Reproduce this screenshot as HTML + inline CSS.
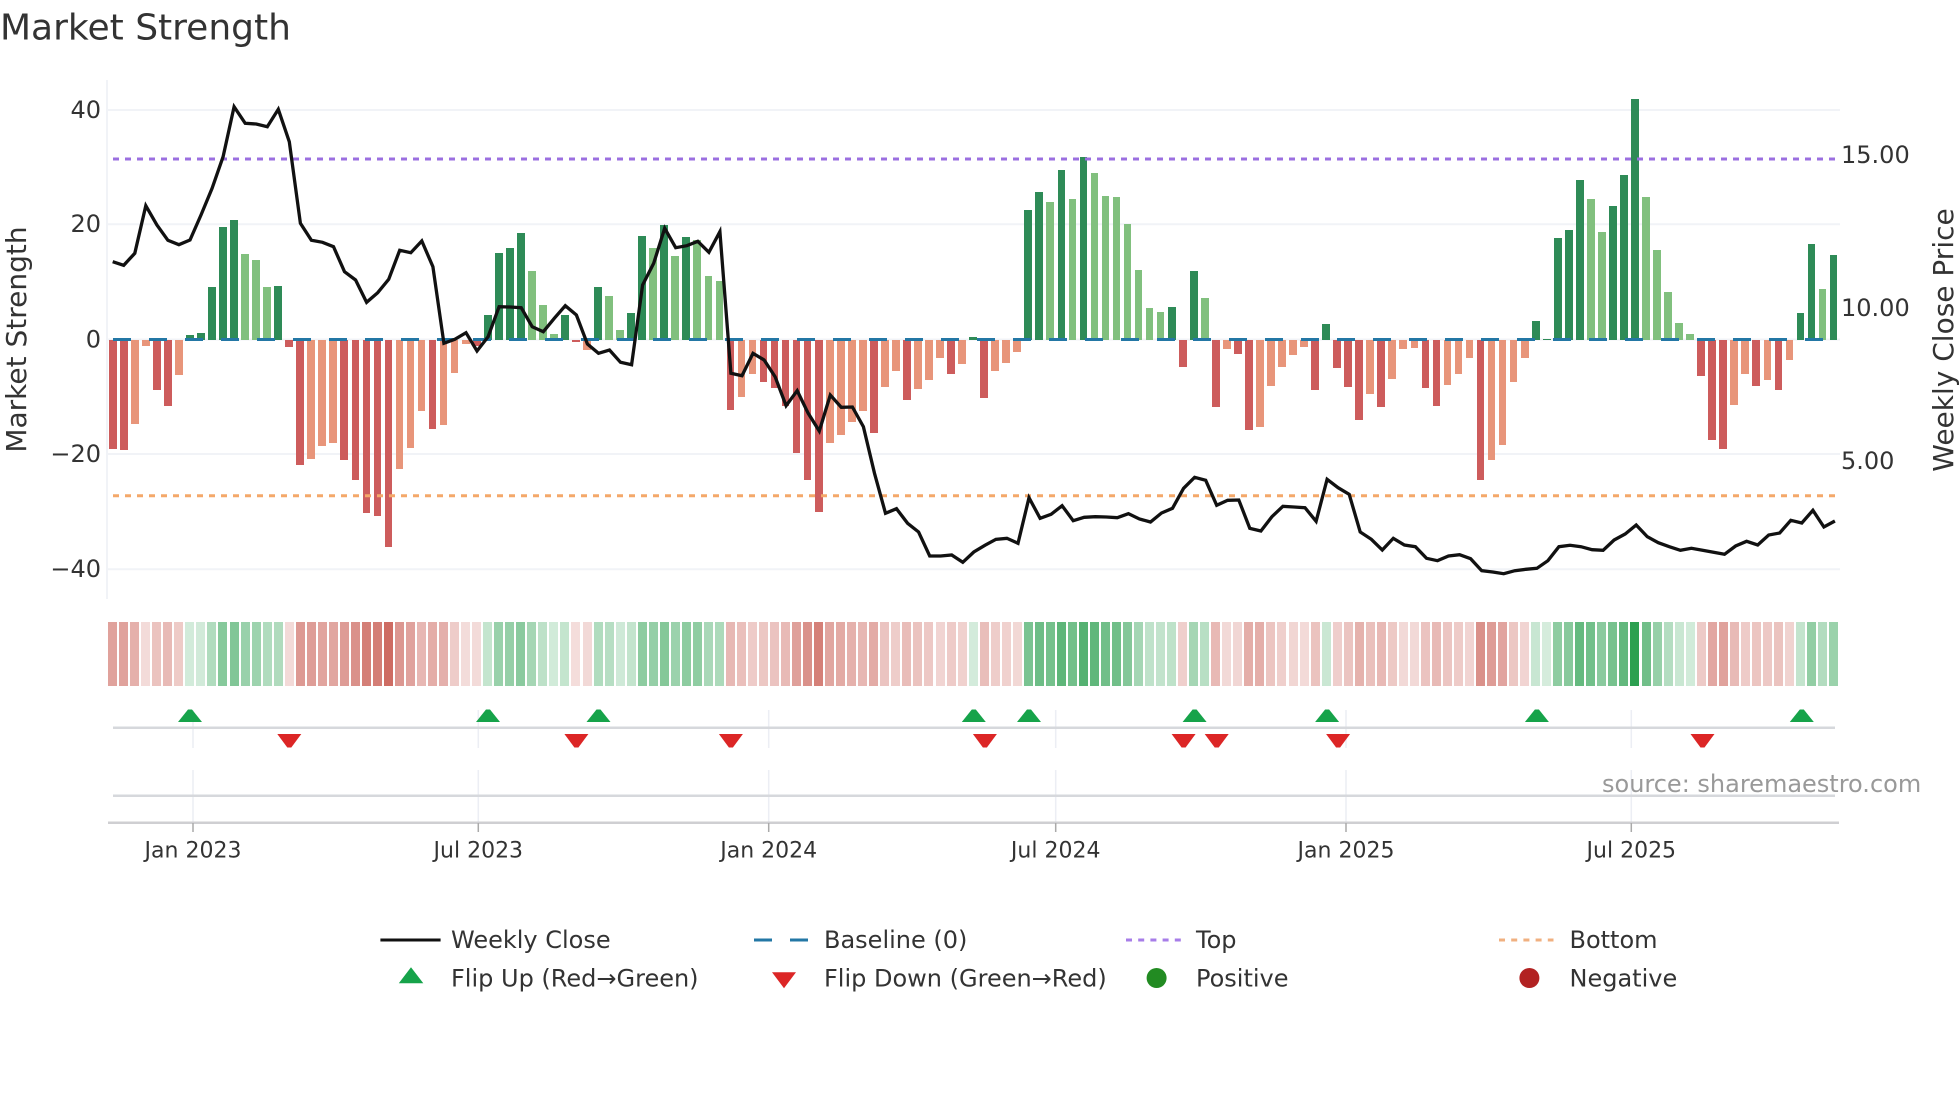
<!DOCTYPE html>
<html><head><meta charset="utf-8"><title>Market Strength</title>
<style>
html,body{margin:0;padding:0;background:#fff}
#p{position:relative;width:1960px;height:1102px;overflow:hidden;background:#fff;font-family:"DejaVu Sans","Liberation Sans",sans-serif}
svg{position:absolute;left:0;top:0}
#r{position:absolute;left:107.18px;top:339.5px;display:flex;height:0}
#r i{display:block;position:relative;flex:none;width:11.04px;height:0}
#r i::after{content:"";position:absolute;left:1.67px;width:7.7px;height:calc(var(--h)*1px)}
#r i::before{content:"";position:absolute;left:1px;width:9px;top:282.5px;height:64px}
.a::after,.b::after{bottom:0;height:calc(var(--h)*1px + 1px)!important}
.c::after,.d::after{top:.5px}
.a::after{background:#2e8b57}
.b::after{background:#81c07e}
.c::after{background:#cd5c5c}
.d::after{background:#e8957a}
.a::before,.b::before{background:rgba(44,160,80,calc(.2 + var(--h)*.00333))}
.c::before,.d::before{background:rgba(200,90,80,calc(.2 + var(--h)*.00333))}
text{fill:#333;font-family:"DejaVu Sans","Liberation Sans",sans-serif}
</style></head><body><div id="p">
<svg width="1960" height="1102">
<g stroke="#f1f3f7" stroke-width="2" fill="none">
<path d="M107 110H1840M107 224.3H1840M107 339.5H1840M107 454H1840M107 569.3H1840M107 80V599"/>
</g>
<g stroke="#eceef4" stroke-width="1.5" fill="none">
<path d="M193 710V748M193 770V823M478.3 710V748M478.3 770V823M768.7 710V748M768.7 770V823M1055.7 710V748M1055.7 770V823M1346 710V748M1346 770V823M1631.3 710V748M1631.3 770V823"/>
</g>
</svg>
<div id="r"><i class=c style=--h:109></i><i class=c style=--h:110></i><i class=d style=--h:84></i><i class=d style=--h:6></i><i class=c style=--h:50></i><i class=c style=--h:66></i><i class=d style=--h:35></i><i class=a style=--h:4></i><i class=a style=--h:6></i><i class=a style=--h:52></i><i class=a style=--h:112></i><i class=a style=--h:119></i><i class=b style=--h:85></i><i class=b style=--h:79></i><i class=b style=--h:52></i><i class=a style=--h:53></i><i class=c style=--h:7></i><i class=c style=--h:125></i><i class=d style=--h:119></i><i class=d style=--h:106></i><i class=d style=--h:103></i><i class=c style=--h:120></i><i class=c style=--h:140></i><i class=c style=--h:173></i><i class=c style=--h:176></i><i class=c style=--h:207></i><i class=d style=--h:129></i><i class=d style=--h:108></i><i class=d style=--h:71></i><i class=c style=--h:89></i><i class=d style=--h:85></i><i class=d style=--h:33></i><i class=d style=--h:4></i><i class=c style=--h:6></i><i class=a style=--h:24></i><i class=a style=--h:86></i><i class=a style=--h:91></i><i class=a style=--h:106></i><i class=b style=--h:68></i><i class=b style=--h:34></i><i class=b style=--h:5></i><i class=a style=--h:24></i><i class=c style=--h:2></i><i class=d style=--h:10></i><i class=a style=--h:52></i><i class=b style=--h:43></i><i class=b style=--h:9></i><i class=a style=--h:26></i><i class=a style=--h:103></i><i class=b style=--h:91></i><i class=a style=--h:114></i><i class=b style=--h:83></i><i class=a style=--h:102></i><i class=b style=--h:99></i><i class=b style=--h:63></i><i class=b style=--h:58></i><i class=c style=--h:70></i><i class=d style=--h:57></i><i class=d style=--h:34></i><i class=c style=--h:42></i><i class=c style=--h:48></i><i class=c style=--h:66></i><i class=c style=--h:113></i><i class=c style=--h:140></i><i class=c style=--h:172></i><i class=d style=--h:103></i><i class=d style=--h:95></i><i class=d style=--h:82></i><i class=d style=--h:71></i><i class=c style=--h:93></i><i class=d style=--h:47></i><i class=d style=--h:31></i><i class=c style=--h:60></i><i class=d style=--h:49></i><i class=d style=--h:40></i><i class=d style=--h:18></i><i class=c style=--h:34></i><i class=d style=--h:24></i><i class=a style=--h:2></i><i class=c style=--h:58></i><i class=d style=--h:31></i><i class=d style=--h:23></i><i class=d style=--h:12></i><i class=a style=--h:129></i><i class=a style=--h:147></i><i class=b style=--h:137></i><i class=a style=--h:169></i><i class=b style=--h:140></i><i class=a style=--h:182></i><i class=b style=--h:166></i><i class=b style=--h:143></i><i class=b style=--h:142></i><i class=b style=--h:115></i><i class=b style=--h:69></i><i class=b style=--h:31></i><i class=b style=--h:27></i><i class=a style=--h:32></i><i class=c style=--h:27></i><i class=a style=--h:68></i><i class=b style=--h:41></i><i class=c style=--h:67></i><i class=d style=--h:9></i><i class=c style=--h:14></i><i class=c style=--h:90></i><i class=d style=--h:87></i><i class=d style=--h:46></i><i class=d style=--h:27></i><i class=d style=--h:15></i><i class=d style=--h:7></i><i class=c style=--h:50></i><i class=a style=--h:15></i><i class=c style=--h:28></i><i class=c style=--h:47></i><i class=c style=--h:80></i><i class=d style=--h:54></i><i class=c style=--h:67></i><i class=d style=--h:39></i><i class=d style=--h:9></i><i class=d style=--h:8></i><i class=c style=--h:48></i><i class=c style=--h:66></i><i class=d style=--h:45></i><i class=d style=--h:34></i><i class=d style=--h:18></i><i class=c style=--h:140></i><i class=d style=--h:120></i><i class=d style=--h:105></i><i class=d style=--h:42></i><i class=d style=--h:18></i><i class=a style=--h:18></i><i class=a style=--h:0></i><i class=a style=--h:101></i><i class=a style=--h:109></i><i class=a style=--h:159></i><i class=b style=--h:140></i><i class=b style=--h:107></i><i class=a style=--h:133></i><i class=a style=--h:164></i><i class=a style=--h:240></i><i class=b style=--h:142></i><i class=b style=--h:89></i><i class=b style=--h:47></i><i class=b style=--h:16></i><i class=b style=--h:5></i><i class=c style=--h:36></i><i class=c style=--h:100></i><i class=c style=--h:109></i><i class=d style=--h:65></i><i class=d style=--h:34></i><i class=c style=--h:46></i><i class=d style=--h:40></i><i class=c style=--h:50></i><i class=d style=--h:20></i><i class=a style=--h:26></i><i class=a style=--h:95></i><i class=b style=--h:50></i><i class=a style=--h:84></i></div>
<svg width="1960" height="1102">
<g fill="none">
<path d="M113 339.5H1838" stroke="#2377a5" stroke-width="3" stroke-dasharray="18 18"/>
<path d="M113 159H1836" stroke="#9b6fe0" stroke-width="3" stroke-dasharray="6 6"/>
<path d="M113 495.7H1836" stroke="#f4a86a" stroke-width="3" stroke-dasharray="6 6"/>
<polyline stroke="#111" stroke-width="3.3" points="112.7,261.7 123.7,265.3 134.8,253.3 145.8,205.7 156.9,225 167.9,240.3 178.9,244.7 190,240 201,215 212.1,188.3 223.1,156.7 234.1,106.7 245.2,123.3 256.2,124 267.3,126.7 278.3,109.3 289.3,141.7 300.4,223.3 311.4,240.3 322.5,242.3 333.5,246.7 344.5,271.7 355.6,280 366.6,302.3 377.7,292.7 388.7,279.3 399.7,250.3 410.8,252.7 421.8,241 432.9,266.7 443.9,343.3 454.9,339.3 466,332.7 477,351 488.1,336.7 499.1,306.7 510.1,307 521.2,307.7 532.2,326.7 543.3,331.7 554.3,318.3 565.3,305.7 576.4,315 587.4,344 598.5,353.3 609.5,350 620.5,362.3 631.6,364.7 642.6,285 653.7,263.3 664.7,228.3 675.7,247.7 686.8,245.7 697.8,241.3 708.9,252.3 719.9,231.7 730.9,373.3 742,375.7 753,353.3 764.1,360 775.1,376.7 786.1,405.7 797.2,390.7 808.2,413.3 819.3,431 830.3,395 841.3,407.3 852.4,407 863.4,426.7 874.5,473.3 885.5,513.3 896.5,508.7 907.6,523.3 918.6,532 929.7,556 940.7,556 951.7,555 962.8,562.3 973.8,552 984.9,545.3 995.9,539.3 1006.9,538.3 1018,543.3 1029,497.7 1040.1,518.3 1051.1,514.3 1062.1,505.7 1073.2,520.7 1084.2,517.3 1095.3,516.7 1106.3,517 1117.3,517.7 1128.4,513.7 1139.4,519 1150.5,522 1161.5,513 1172.5,508.3 1183.6,488.3 1194.6,477.3 1205.7,480.3 1216.7,505.3 1227.7,500.3 1238.8,500 1249.8,528.3 1260.9,531 1271.9,516.7 1282.9,506.3 1294,507 1305,507.7 1316.1,521.3 1327.1,479.3 1338.1,487.7 1349.2,494.3 1360.2,532 1371.3,539.3 1382.3,550 1393.3,538.3 1404.4,545 1415.4,546.7 1426.5,558.3 1437.5,560.7 1448.5,556 1459.6,554.7 1470.6,558.7 1481.7,570.7 1492.7,572 1503.7,573.7 1514.8,570.7 1525.8,569.3 1536.9,568.3 1547.9,560.7 1558.9,546.7 1570,545.3 1581,546.7 1592.1,549.7 1603.1,550.3 1614.1,540 1625.2,534 1636.2,525 1647.3,536.7 1658.3,542.7 1669.3,546.7 1680.4,550.3 1691.4,548.3 1702.5,550.3 1713.5,552.3 1724.5,554.3 1735.6,546 1746.6,541.3 1757.7,545 1768.7,535 1779.7,533 1790.8,520.3 1801.8,523 1812.9,510.3 1823.9,527 1834.9,521"/>
<path d="M113 727.7H1835M113 795.7H1835" stroke="#d6d8dc" stroke-width="2.5"/>
<path d="M108 822.7H1839" stroke="#cfcfd2" stroke-width="2.5"/>
<path d="M193 823V832M478.3 823V832M768.7 823V832M1055.7 823V832M1346 823V832M1631.3 823V832" stroke="#aaa" stroke-width="1.5"/>
</g>
<g fill="#16a34a">
<path d="M188 709.5h4l10 12.5h-24z"/>
<path d="M486 709.5h4l10 12.5h-24z"/>
<path d="M596.5 709.5h4l10 12.5h-24z"/>
<path d="M971.8 709.5h4l10 12.5h-24z"/>
<path d="M1027 709.5h4l10 12.5h-24z"/>
<path d="M1192.6 709.5h4l10 12.5h-24z"/>
<path d="M1325.1 709.5h4l10 12.5h-24z"/>
<path d="M1534.9 709.5h4l10 12.5h-24z"/>
<path d="M1799.8 709.5h4l10 12.5h-24z"/>
</g>
<g fill="#dc2626">
<path d="M277.3 734h24l-10 13.5h-4z"/>
<path d="M564.4 734h24l-10 13.5h-4z"/>
<path d="M718.9 734h24l-10 13.5h-4z"/>
<path d="M972.9 734h24l-10 13.5h-4z"/>
<path d="M1171.6 734h24l-10 13.5h-4z"/>
<path d="M1204.7 734h24l-10 13.5h-4z"/>
<path d="M1326.1 734h24l-10 13.5h-4z"/>
<path d="M1690.5 734h24l-10 13.5h-4z"/>
</g>
<text x="0" y="39.5" font-size="36">Market Strength</text>
<g font-size="24" text-anchor="end">
<text x="101" y="118">40</text>
<text x="101" y="232">20</text>
<text x="101" y="347.5">0</text>
<text x="101" y="462">−20</text>
<text x="101" y="577">−40</text>
</g>
<g font-size="24">
<text x="1841" y="163">15.00</text>
<text x="1841" y="316">10.00</text>
<text x="1841" y="469">5.00</text>
</g>
<text transform="translate(26 339.5) rotate(-90)" font-size="28" text-anchor="middle">Market Strength</text>
<text transform="translate(1953 340) rotate(-90)" font-size="28" text-anchor="middle">Weekly Close Price</text>
<g font-size="22" text-anchor="middle">
<text x="193" y="857.5">Jan 2023</text>
<text x="478.3" y="857.5">Jul 2023</text>
<text x="768.7" y="857.5">Jan 2024</text>
<text x="1055.7" y="857.5">Jul 2024</text>
<text x="1346" y="857.5">Jan 2025</text>
<text x="1631.3" y="857.5">Jul 2025</text>
</g>
<text x="1602" y="792" font-size="24" style="fill:#999">source: sharemaestro.com</text>
<g font-size="24">
<text x="451" y="948">Weekly Close</text>
<text x="824" y="948">Baseline (0)</text>
<text x="1196" y="948">Top</text>
<text x="1569.5" y="948">Bottom</text>
<text x="451" y="986.5">Flip Up (Red→Green)</text>
<text x="824" y="986.5">Flip Down (Green→Red)</text>
<text x="1196" y="986.5">Positive</text>
<text x="1569.5" y="986.5">Negative</text>
</g>
<g fill="none" stroke-width="3">
<path d="M380.4 940H440.6" stroke="#111"/>
<path d="M754 940H772M790 940H808" stroke="#2377a5"/>
<path d="M1126 940H1181" stroke="#a77de8" stroke-dasharray="6 6.2"/>
<path d="M1499 940H1553.5" stroke="#f0b080" stroke-dasharray="6 6.2"/>
</g>
<path d="M411 967.3L423.3 983.3H398.8z" fill="#16a34a"/>
<path d="M772 972.3H796L784 988.3z" fill="#dc2626"/>
<circle cx="1156.6" cy="978" r="10" fill="#228b22"/>
<circle cx="1529.4" cy="978" r="10" fill="#b22222"/>
</svg>
</div></body></html>
